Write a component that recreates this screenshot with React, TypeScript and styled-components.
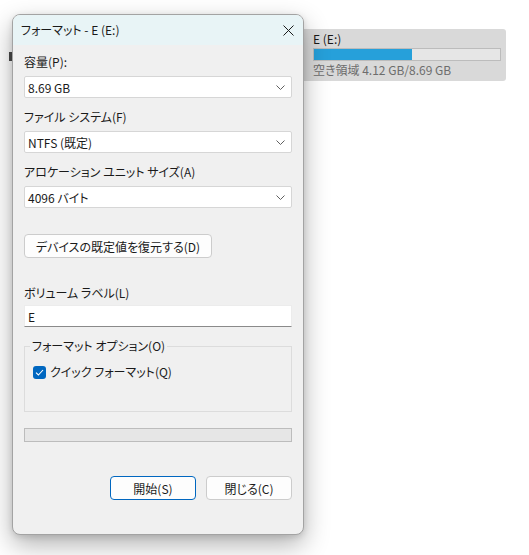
import styled, { createGlobalStyle } from 'styled-components'

const GlobalStyle = createGlobalStyle`
   html, body {
      margin: 0;
      padding: 0;
      background: #fff;
   }
   body {
      font-family: "Noto Sans CJK JP", "Noto Sans", sans-serif;
      font-feature-settings: "palt";
      color: #1a1a1a;
      font-size: 12px;
   }
`

const Desktop = styled.div`
   position: relative;
   width: 529px;
   height: 555px;
   overflow: hidden;
   background: #fff;
`

// window peeking out behind the dialog on the left
const Peek = styled.div`
   position: absolute;
   left: 9px;
   top: 52px;
   width: 3px;
   height: 9px;
   background: #4a4a4a;
`

const DrivePanel = styled.div`
   position: absolute;
   left: 290px;
   top: 29px;
   width: 216px;
   height: 52px;
   box-sizing: border-box;
   padding: 2px 5px 0 23px;
   background: #d9d9d9;
   border-radius: 0 3px 3px 0;
   display: flex;
   flex-direction: column;

   .name {
      line-height: 16px;
      height: 17px;
   }
   .free {
      color: #6d6d6d;
      line-height: 18px;
   }
`

const UsageBar = styled.div`
   height: 13px;
   box-sizing: border-box;
   border: 1px solid #bcbcbc;
   background: #e6e6e6;
`

const UsageFill = styled.div`
   height: 100%;
   background: #26a0da;
`

const Dialog = styled.div`
   position: absolute;
   left: 12px;
   top: 14px;
   width: 292px;
   height: 521px;
   box-sizing: border-box;
   display: flex;
   flex-direction: column;
   background: #f0f0f0;
   border: 1px solid #a3a3a3;
   border-radius: 8px;
   overflow: hidden;
   box-shadow: 0 10px 26px rgba(0, 0, 0, 0.3), 0 2px 6px rgba(0, 0, 0, 0.12);
`

const TitleBar = styled.div`
   height: 30px;
   flex: none;
   display: flex;
   align-items: center;
   justify-content: space-between;
   padding: 0 9px 0 8px;
   background: #e8f4f6;
   line-height: 16px;
`

const CloseButton = styled.div`
   width: 12px;
   height: 12px;
   display: flex;
   align-items: center;
   justify-content: center;
`

const Body = styled.div`
   flex: 1;
   display: flex;
   flex-direction: column;
   padding: 9px 11px 0 11px;
`

const Field = styled.div<{ $gap?: number }>`
   display: flex;
   flex-direction: column;
   margin-top: ${(p) => p.$gap ?? 0}px;
`

const Label = styled.div<{ $space?: number }>`
   line-height: 16px;
   height: 16px;
   margin-bottom: ${(p) => p.$space ?? 6}px;
   white-space: nowrap;
`

const Select = styled.div`
   height: 22px;
   box-sizing: border-box;
   display: flex;
   align-items: center;
   justify-content: space-between;
   padding: 0 6px 0 3px;
   background: #fff;
   border: 1px solid #d6d6d6;
   border-radius: 2px;
`

const TextInput = styled.div`
   height: 22px;
   box-sizing: border-box;
   display: flex;
   align-items: center;
   padding: 0 3px;
   background: #fff;
   border: 1px solid #ececec;
   border-bottom: 1px solid #8a8a8a;
`

const Button = styled.div<{ $primary?: boolean; $width: number }>`
   width: ${(p) => p.$width}px;
   height: 24px;
   box-sizing: border-box;
   display: flex;
   align-items: center;
   justify-content: center;
   background: #fdfdfd;
   border: 1px solid ${(p) => (p.$primary ? '#0067c0' : '#cccccc')};
   border-radius: 4px;
   white-space: nowrap;
`

const Options = styled.fieldset`
   margin: 11px 0 0 0;
   padding: 10px 8px 0 8px;
   height: 74px;
   box-sizing: border-box;
   border: 1px solid #dcdcdc;

   legend {
      padding: 0 2px;
      margin-left: -3px;
      line-height: 16px;
   }
`

const CheckRow = styled.div`
   display: flex;
   align-items: center;
   gap: 4px;
   line-height: 16px;
`

const CheckBox = styled.div`
   width: 13px;
   height: 13px;
   border-radius: 3px;
   background: #0067c0;
   display: flex;
   align-items: center;
   justify-content: center;
`

const Progress = styled.div`
   margin-top: 16px;
   height: 14px;
   box-sizing: border-box;
   border: 1px solid #bcbcbc;
   background: #e6e6e6;
`

const Footer = styled.div`
   margin-top: 34px;
   display: flex;
   justify-content: flex-end;
   gap: 10px;
`

const Chevron = () => (
   <svg width="9" height="5" viewBox="0 0 9 5">
      <path d="M0.5 0.5 L4.5 4.5 L8.5 0.5" fill="none" stroke="#5f5f5f" strokeWidth="1" />
   </svg>
)

const App = () => {
   const used = 52.6

   return (
      <Desktop>
         <GlobalStyle />
         <Peek />
         <DrivePanel>
            <div className="name">E (E:)</div>
            <UsageBar>
               <UsageFill style={{ width: `${used}%` }} />
            </UsageBar>
            <div className="free">空き領域 4.12 GB/8.69 GB</div>
         </DrivePanel>

         <Dialog>
            <TitleBar>
               <span>フォーマット - E (E:)</span>
               <CloseButton>
                  <svg width="11" height="11" viewBox="0 0 11 11">
                     <path d="M0.5 0.5 L10.5 10.5 M10.5 0.5 L0.5 10.5" stroke="#1a1a1a" strokeWidth="1" />
                  </svg>
               </CloseButton>
            </TitleBar>

            <Body>
               <Field>
                  <Label>容量(P):</Label>
                  <Select>
                     <span>8.69 GB</span>
                     <Chevron />
                  </Select>
               </Field>
               <Field $gap={11}>
                  <Label>ファイル システム(F)</Label>
                  <Select>
                     <span>NTFS (既定)</span>
                     <Chevron />
                  </Select>
               </Field>
               <Field $gap={11}>
                  <Label>アロケーション ユニット サイズ(A)</Label>
                  <Select>
                     <span>4096 バイト</span>
                     <Chevron />
                  </Select>
               </Field>

               <Field $gap={26}>
                  <Button $width={188}>デバイスの既定値を復元する(D)</Button>
               </Field>

               <Field $gap={27}>
                  <Label $space={4}>ボリューム ラベル(L)</Label>
                  <TextInput>E</TextInput>
               </Field>

               <Options>
                  <legend>フォーマット オプション(O)</legend>
                  <CheckRow>
                     <CheckBox>
                        <svg width="9" height="7" viewBox="0 0 9 7">
                           <path d="M1 3.6 L3.4 6 L8 1" fill="none" stroke="#fff" strokeWidth="1.1" />
                        </svg>
                     </CheckBox>
                     <span>クイック フォーマット(Q)</span>
                  </CheckRow>
               </Options>

               <Progress />

               <Footer>
                  <Button $primary $width={86}>開始(S)</Button>
                  <Button $width={86}>閉じる(C)</Button>
               </Footer>
            </Body>
         </Dialog>
      </Desktop>
   )
}

export default App
